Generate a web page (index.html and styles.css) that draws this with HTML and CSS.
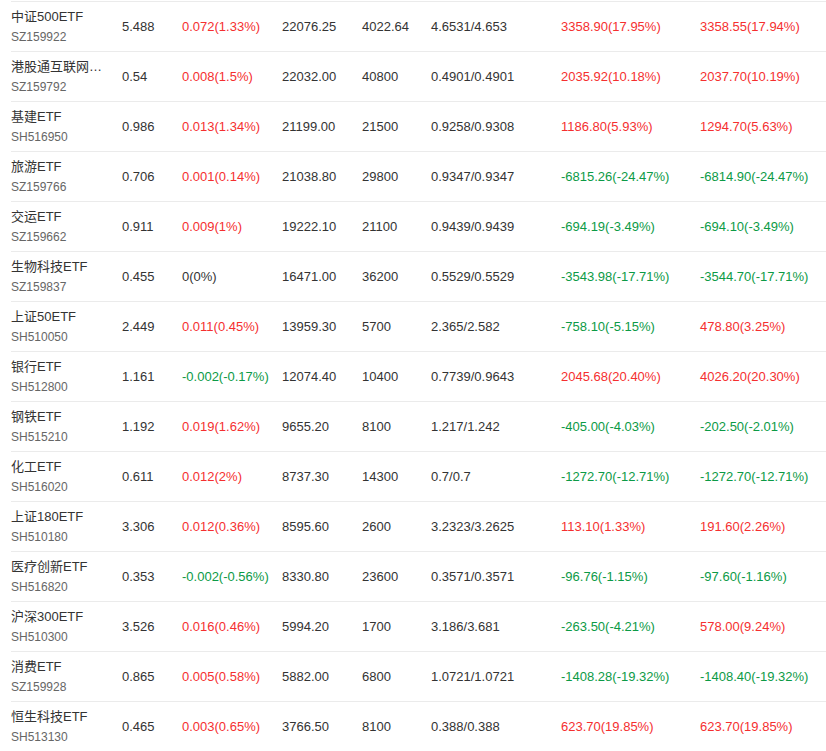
FILE: index.html
```html
<!DOCTYPE html>
<html lang="zh-CN">
<head>
<meta charset="utf-8">
<title>ETF 列表</title>
<link rel="stylesheet" href="styles.css">
</head>
<body>
<div class="list">
  <div class="row"><div class="name"><div class="title">中证500ETF</div><div class="code">SZ159922</div></div><div>5.488</div><div class="up">0.072(1.33%)</div><div>22076.25</div><div>4022.64</div><div>4.6531/4.653</div><div class="up">3358.90(17.95%)</div><div class="up">3358.55(17.94%)</div></div>
  <div class="row"><div class="name"><div class="title">港股通互联网ETF</div><div class="code">SZ159792</div></div><div>0.54</div><div class="up">0.008(1.5%)</div><div>22032.00</div><div>40800</div><div>0.4901/0.4901</div><div class="up">2035.92(10.18%)</div><div class="up">2037.70(10.19%)</div></div>
  <div class="row"><div class="name"><div class="title">基建ETF</div><div class="code">SH516950</div></div><div>0.986</div><div class="up">0.013(1.34%)</div><div>21199.00</div><div>21500</div><div>0.9258/0.9308</div><div class="up">1186.80(5.93%)</div><div class="up">1294.70(5.63%)</div></div>
  <div class="row"><div class="name"><div class="title">旅游ETF</div><div class="code">SZ159766</div></div><div>0.706</div><div class="up">0.001(0.14%)</div><div>21038.80</div><div>29800</div><div>0.9347/0.9347</div><div class="down">-6815.26(-24.47%)</div><div class="down">-6814.90(-24.47%)</div></div>
  <div class="row"><div class="name"><div class="title">交运ETF</div><div class="code">SZ159662</div></div><div>0.911</div><div class="up">0.009(1%)</div><div>19222.10</div><div>21100</div><div>0.9439/0.9439</div><div class="down">-694.19(-3.49%)</div><div class="down">-694.10(-3.49%)</div></div>
  <div class="row"><div class="name"><div class="title">生物科技ETF</div><div class="code">SZ159837</div></div><div>0.455</div><div>0(0%)</div><div>16471.00</div><div>36200</div><div>0.5529/0.5529</div><div class="down">-3543.98(-17.71%)</div><div class="down">-3544.70(-17.71%)</div></div>
  <div class="row"><div class="name"><div class="title">上证50ETF</div><div class="code">SH510050</div></div><div>2.449</div><div class="up">0.011(0.45%)</div><div>13959.30</div><div>5700</div><div>2.365/2.582</div><div class="down">-758.10(-5.15%)</div><div class="up">478.80(3.25%)</div></div>
  <div class="row"><div class="name"><div class="title">银行ETF</div><div class="code">SH512800</div></div><div>1.161</div><div class="down">-0.002(-0.17%)</div><div>12074.40</div><div>10400</div><div>0.7739/0.9643</div><div class="up">2045.68(20.40%)</div><div class="up">4026.20(20.30%)</div></div>
  <div class="row"><div class="name"><div class="title">钢铁ETF</div><div class="code">SH515210</div></div><div>1.192</div><div class="up">0.019(1.62%)</div><div>9655.20</div><div>8100</div><div>1.217/1.242</div><div class="down">-405.00(-4.03%)</div><div class="down">-202.50(-2.01%)</div></div>
  <div class="row"><div class="name"><div class="title">化工ETF</div><div class="code">SH516020</div></div><div>0.611</div><div class="up">0.012(2%)</div><div>8737.30</div><div>14300</div><div>0.7/0.7</div><div class="down">-1272.70(-12.71%)</div><div class="down">-1272.70(-12.71%)</div></div>
  <div class="row"><div class="name"><div class="title">上证180ETF</div><div class="code">SH510180</div></div><div>3.306</div><div class="up">0.012(0.36%)</div><div>8595.60</div><div>2600</div><div>3.2323/3.2625</div><div class="up">113.10(1.33%)</div><div class="up">191.60(2.26%)</div></div>
  <div class="row"><div class="name"><div class="title">医疗创新ETF</div><div class="code">SH516820</div></div><div>0.353</div><div class="down">-0.002(-0.56%)</div><div>8330.80</div><div>23600</div><div>0.3571/0.3571</div><div class="down">-96.76(-1.15%)</div><div class="down">-97.60(-1.16%)</div></div>
  <div class="row"><div class="name"><div class="title">沪深300ETF</div><div class="code">SH510300</div></div><div>3.526</div><div class="up">0.016(0.46%)</div><div>5994.20</div><div>1700</div><div>3.186/3.681</div><div class="down">-263.50(-4.21%)</div><div class="up">578.00(9.24%)</div></div>
  <div class="row"><div class="name"><div class="title">消费ETF</div><div class="code">SZ159928</div></div><div>0.865</div><div class="up">0.005(0.58%)</div><div>5882.00</div><div>6800</div><div>1.0721/1.0721</div><div class="down">-1408.28(-19.32%)</div><div class="down">-1408.40(-19.32%)</div></div>
  <div class="row"><div class="name"><div class="title">恒生科技ETF</div><div class="code">SH513130</div></div><div>0.465</div><div class="up">0.003(0.65%)</div><div>3766.50</div><div>8100</div><div>0.388/0.388</div><div class="up">623.70(19.85%)</div><div class="up">623.70(19.85%)</div></div>
</div>
</body>
</html>
```
FILE: styles.css
```css
html, body {
  margin: 0;
  padding: 0;
  background: #fff;
}
body {
  font-family: "Liberation Sans", Arial, "Noto Sans CJK SC", sans-serif;
  font-size: 13px;
  color: #333;
  overflow: hidden;
}
.list {
  padding: 1px 0 0 11px;
}
.row {
  display: grid;
  grid-template-columns: 111px 60px 100px 80px 69px 130px 139px 1fr;
  align-items: center;
  height: 49px;
  border-top: 1px solid #ebebeb;
  white-space: nowrap;
}
.name {
  line-height: 20px;
}
.title {
  width: 95px;
  overflow: hidden;
  text-overflow: ellipsis;
  white-space: nowrap;
  color: #333;
}
.code {
  font-size: 12px;
  color: #666;
}
.up {
  color: #f52f2f;
}
.down {
  color: #0c9a46;
}
```
